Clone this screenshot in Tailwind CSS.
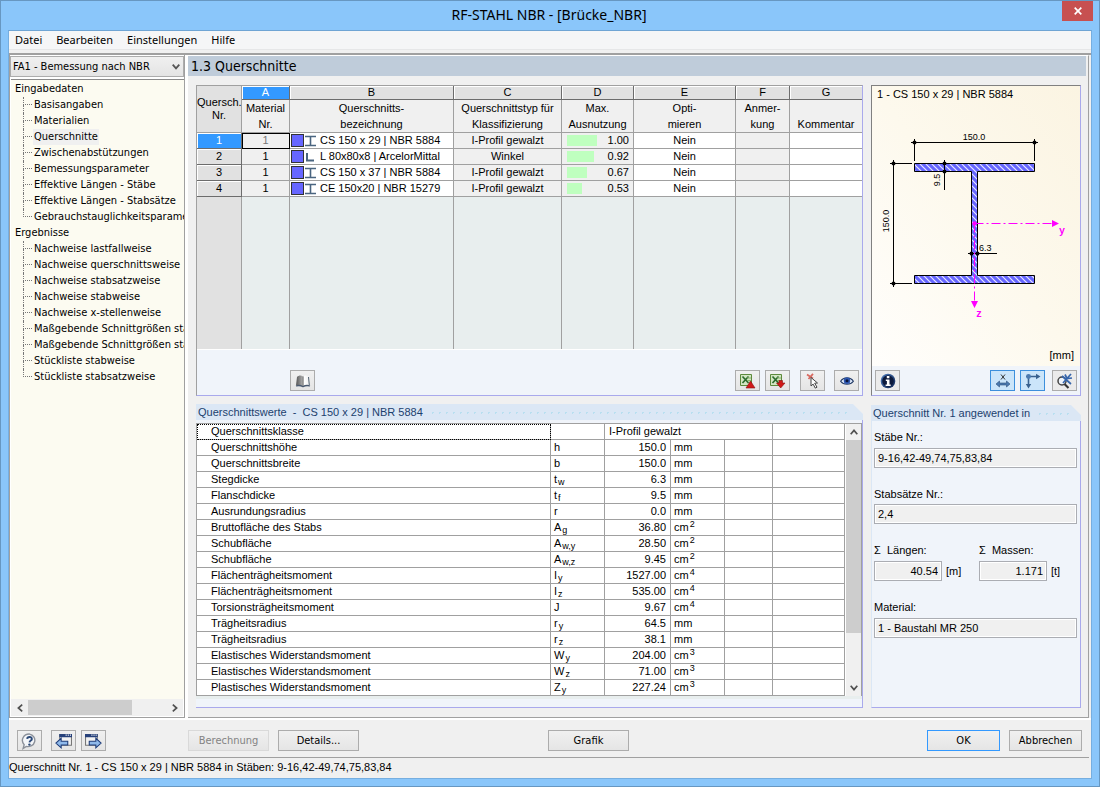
<!DOCTYPE html>
<html lang="de">
<head>
<meta charset="utf-8">
<meta name="viewport" content="width=device-width, initial-scale=1">
<title>RF-STAHL NBR - [Brücke_NBR]</title>
<script src="https://cdn.jsdelivr.net/npm/@tailwindcss/browser@4"></script>
</head>
<body class="flex flex-col min-h-screen bg-[#8ac6fa] border border-[#6797c1] font-['Liberation_Sans',sans-serif] text-[11px] text-black overflow-x-hidden">

<!-- icon definitions -->
<svg class="absolute w-0 h-0">
  <defs>
    <symbol id="i-beam" viewBox="0 0 13 12"><path d="M1 1.5h11M1 10.5h11M6.5 1v10" fill="none" stroke="#4a6580" stroke-width="1.6"/></symbol>
    <symbol id="i-angle" viewBox="0 0 13 12"><path d="M3 2v7.5h7" fill="none" stroke="#4a6580" stroke-width="2"/></symbol>
    <linearGradient id="g-book" x1="0" x2="1"><stop offset="0" stop-color="#555"/><stop offset=".45" stop-color="#aaa"/><stop offset=".6" stop-color="#fff"/><stop offset="1" stop-color="#eee"/></linearGradient>
    <linearGradient id="g-blue" x1="0" x2="1" y1="0" y2="1"><stop offset="0" stop-color="#4f7fc0"/><stop offset="1" stop-color="#0b1f4b"/></linearGradient>
  </defs>
</svg>

<!-- title bar -->
<header class="flex items-start h-[29px] shrink-0">
  <h1 class="flex-1 pl-[35px] pt-1 text-center font-['Noto_Sans',sans-serif] text-[14px] leading-5">RF-STAHL NBR - [Brücke_NBR]</h1>
  <button aria-label="Schließen" class="flex items-center justify-center w-[31px] h-5 mr-1.5 bg-[#c75050] hover:bg-red-600">
    <svg class="w-2 h-2" viewBox="0 0 8 8"><path d="M.7.7l6.6 6.6M7.3.7L.7 7.3" stroke="#fff" stroke-width="1.7"/></svg>
  </button>
</header>

<div class="flex flex-col flex-1 mx-[7px] mb-[7px] bg-[#f0f0f0] border border-t-[#6fa5d4] border-[#76aee0]">
  <!-- menu bar -->
  <nav class="flex items-center gap-[14px] h-[19px] shrink-0 pl-1.5 pt-px bg-[#f5f6f7] border-b border-[#e6e7e8] font-['Noto_Sans',sans-serif]">
    <a href="#">Datei</a><a href="#">Bearbeiten</a><a href="#">Einstellungen</a><a href="#">Hilfe</a>
  </nav>

  <div class="flex flex-1 min-h-0 mt-[3px] border-t-2 border-[#a0a0a0]">
    <!-- navigator -->
    <aside class="flex flex-col w-[176px] shrink-0 border-l border-r border-b border-[#a0a0a0] bg-white font-['DejaVu_Sans_Condensed','DejaVu_Sans',sans-serif]">
      <div class="grid mt-px mb-0.5 items-center">
        <select aria-label="Bemessungsfall" class="col-start-1 row-start-1 appearance-none w-full h-[21px] pl-0.5 pt-0.5 pr-4 bg-linear-to-b from-[#f0f0f0] to-[#e4e4e4] border border-[#acacac]"><option>FA1 - Bemessung nach NBR</option></select>
        <svg class="col-start-1 row-start-1 justify-self-end w-2 h-[6px] mr-1 pointer-events-none" viewBox="0 0 8 6"><path d="M.7.7L4 4.4 7.3.7" fill="none" stroke="#555" stroke-width="1.8"/></svg>
      </div>
      <div class="flex-1 overflow-hidden ml-px pt-px border-t border-[#8a8a8a] bg-[#fcfbf1] leading-4 whitespace-nowrap">
        <p class="pl-1">Eingabedaten</p>
        <ul class="pl-3 [&>li]:flex [&>li>span]:w-[9px] [&>li>span]:mr-px [&>li>span]:shrink-0 [&>li>span>i]:block [&>li>span>i]:h-2 [&>li>span>i]:border-l [&>li>span>i]:border-dotted [&>li>span>i]:border-[#777] [&>li>span>i:first-child]:border-b [&>li:last-child>span>i:last-child]:border-0 [&_a]:px-px">
          <li><span><i></i><i></i></span><a href="#">Basisangaben</a></li>
          <li><span><i></i><i></i></span><a href="#">Materialien</a></li>
          <li><span><i></i><i></i></span><a href="#" class="bg-[#f0f0f0]">Querschnitte</a></li>
          <li><span><i></i><i></i></span><a href="#">Zwischenabstützungen</a></li>
          <li><span><i></i><i></i></span><a href="#">Bemessungsparameter</a></li>
          <li><span><i></i><i></i></span><a href="#">Effektive Längen - Stäbe</a></li>
          <li><span><i></i><i></i></span><a href="#">Effektive Längen - Stabsätze</a></li>
          <li><span><i></i><i></i></span><a href="#">Gebrauchstauglichkeitsparamet</a></li>
        </ul>
        <p class="pl-1">Ergebnisse</p>
        <ul class="pl-3 [&>li]:flex [&>li>span]:w-[9px] [&>li>span]:mr-px [&>li>span]:shrink-0 [&>li>span>i]:block [&>li>span>i]:h-2 [&>li>span>i]:border-l [&>li>span>i]:border-dotted [&>li>span>i]:border-[#777] [&>li>span>i:first-child]:border-b [&>li:last-child>span>i:last-child]:border-0 [&_a]:px-px">
          <li><span><i></i><i></i></span><a href="#">Nachweise lastfallweise</a></li>
          <li><span><i></i><i></i></span><a href="#">Nachweise querschnittsweise</a></li>
          <li><span><i></i><i></i></span><a href="#">Nachweise stabsatzweise</a></li>
          <li><span><i></i><i></i></span><a href="#">Nachweise stabweise</a></li>
          <li><span><i></i><i></i></span><a href="#">Nachweise x-stellenweise</a></li>
          <li><span><i></i><i></i></span><a href="#">Maßgebende Schnittgrößen sta</a></li>
          <li><span><i></i><i></i></span><a href="#">Maßgebende Schnittgrößen sta</a></li>
          <li><span><i></i><i></i></span><a href="#">Stückliste stabweise</a></li>
          <li><span><i></i><i></i></span><a href="#">Stückliste stabsatzweise</a></li>
        </ul>
      </div>
      <div class="flex items-center h-[17px] mx-px mb-px bg-[#f0f0f0]">
        <button aria-label="Nach links" class="flex w-[17px] justify-center"><svg class="w-1.5 h-2" viewBox="0 0 6 8"><path d="M5.2.7L1.4 4l3.8 3.3" fill="none" stroke="#505050" stroke-width="1.7"/></svg></button>
        <div class="w-[104px] h-[15px] bg-[#cdcdcd]"></div>
        <button aria-label="Nach rechts" class="flex w-[17px] justify-center ml-auto"><svg class="w-1.5 h-2" viewBox="0 0 6 8"><path d="M.8.7L4.6 4 .8 7.3" fill="none" stroke="#505050" stroke-width="1.7"/></svg></button>
      </div>
    </aside>

    <!-- main mask -->
    <main class="flex flex-col flex-1 min-w-0 border-l-[3px] border-white">
      <div class="flex flex-col flex-1 mr-[2px] border-t border-t-white border-r border-b border-r-[#a0a0a0] border-b-[#a0a0a0]">
        <h2 class="h-5 pl-[3px] mr-[2px] bg-[#bfccda] font-['DejaVu_Sans_Condensed','DejaVu_Sans',sans-serif] text-[14px] leading-[21px]">1.3 Querschnitte</h2>
        <div class="flex flex-1 gap-2 pt-[9px] pb-[9px] pl-2 pr-[7px]">

          <!-- left column -->
          <div class="flex flex-col flex-1 min-w-0 gap-2">
            <section class="flex flex-col h-[311px] bg-[#f0f4fa] border border-t-[#a0a0a0] border-l-[#a0a0a0] border-r-[#a9a9ec] border-b-[#a9a9ec]">
              <div class="h-[264px] border-b border-white">
              <table class="w-full h-full table-fixed border-separate border-spacing-0 text-center leading-[15px] whitespace-nowrap [&_td]:border-b [&_td]:border-r [&_td]:border-[#a0a0a0] [&_th]:font-normal [&_th]:p-0 [&_td]:p-0 [&_tr>*:last-child]:border-r-0">
                <colgroup><col class="w-[45px]"><col class="w-12"><col class="w-[164px]"><col class="w-[108px]"><col class="w-[72px]"><col class="w-[102px]"><col class="w-[54px]"><col></colgroup>
                <thead>
                  <tr class="h-[14px] leading-[13px] [&>th]:bg-[#e1e1e1] [&>th]:border-r [&>th]:border-b [&>th]:border-[#6c6c6c] [&>th]:shadow-[inset_1px_1px_0_#fff]">
                    <th rowspan="2" class="!border-[#a0a0a0] !shadow-none">Quersch.<br>Nr.</th>
                    <th class="!bg-[#3399ff] text-white">A</th><th>B</th><th>C</th><th>D</th><th>E</th><th>F</th><th>G</th>
                  </tr>
                  <tr class="h-[33px] leading-4 bg-[#f0f0f0] [&>th]:border-r [&>th]:border-b [&>th]:border-[#a0a0a0]">
                    <th>Material<br>Nr.</th><th>Querschnitts-<br>bezeichnung</th><th>Querschnittstyp für<br>Klassifizierung</th><th>Max.<br>Ausnutzung</th><th>Opti-<br>mieren</th><th>Anmer-<br>kung</th><th class="align-bottom">Kommentar</th>
                  </tr>
                </thead>
                <tbody class="[&>tr>th]:bg-[#e1e1e1] [&>tr>th]:border-r [&>tr>th]:border-b [&>tr>th]:border-[#6c6c6c] [&>tr>th]:shadow-[inset_1px_1px_0_#fff]">
                  <tr class="h-4 bg-white">
                    <th class="!bg-[#3399ff] text-white">1</th>
                    <td class="bg-[#f0f0f0] text-[#777] !border-black shadow-[inset_1px_1px_0_#000]">1</td>
                    <td><div class="flex items-center gap-[3px] pl-px"><i class="w-[13px] h-[13px] bg-[#6666ff] border border-[#333]"></i><svg class="w-[13px] h-3 -ml-[3px]"><use href="#i-beam"/></svg>CS 150 x 29 | NBR 5884</div></td>
                    <td class="bg-[#f0f0f0]">I-Profil gewalzt</td>
                    <td class="bg-[#f0f0f0]"><div class="flex items-center justify-between pl-[5px] pr-1"><i class="h-[11px] bg-[#bfffbf]" style="width:30px"></i>1.00</div></td>
                    <td>Nein</td><td class="bg-[#f0f0f0]"></td><td></td>
                  </tr>
                  <tr class="h-4 bg-white">
                    <th>2</th><td class="bg-[#f0f0f0]">1</td>
                    <td><div class="flex items-center gap-[3px] pl-px"><i class="w-[13px] h-[13px] bg-[#6666ff] border border-[#333]"></i><svg class="w-[13px] h-3 -ml-[3px]"><use href="#i-angle"/></svg>L 80x80x8 | ArcelorMittal</div></td>
                    <td class="bg-[#f0f0f0]">Winkel</td>
                    <td class="bg-[#f0f0f0]"><div class="flex items-center justify-between pl-[5px] pr-1"><i class="h-[11px] bg-[#bfffbf]" style="width:27px"></i>0.92</div></td>
                    <td>Nein</td><td class="bg-[#f0f0f0]"></td><td></td>
                  </tr>
                  <tr class="h-4 bg-white">
                    <th>3</th><td class="bg-[#f0f0f0]">1</td>
                    <td><div class="flex items-center gap-[3px] pl-px"><i class="w-[13px] h-[13px] bg-[#6666ff] border border-[#333]"></i><svg class="w-[13px] h-3 -ml-[3px]"><use href="#i-beam"/></svg>CS 150 x 37 | NBR 5884</div></td>
                    <td class="bg-[#f0f0f0]">I-Profil gewalzt</td>
                    <td class="bg-[#f0f0f0]"><div class="flex items-center justify-between pl-[5px] pr-1"><i class="h-[11px] bg-[#bfffbf]" style="width:20px"></i>0.67</div></td>
                    <td>Nein</td><td class="bg-[#f0f0f0]"></td><td></td>
                  </tr>
                  <tr class="h-4 bg-white">
                    <th>4</th><td class="bg-[#f0f0f0]">1</td>
                    <td><div class="flex items-center gap-[3px] pl-px"><i class="w-[13px] h-[13px] bg-[#6666ff] border border-[#333]"></i><svg class="w-[13px] h-3 -ml-[3px]"><use href="#i-beam"/></svg>CE 150x20 | NBR 15279</div></td>
                    <td class="bg-[#f0f0f0]">I-Profil gewalzt</td>
                    <td class="bg-[#f0f0f0]"><div class="flex items-center justify-between pl-[5px] pr-1"><i class="h-[11px] bg-[#bfffbf]" style="width:15px"></i>0.53</div></td>
                    <td>Nein</td><td class="bg-[#f0f0f0]"></td><td></td>
                  </tr>
                  <tr class="bg-[#e8eeee] [&>td]:border-b-0"><td class="bg-[#e1e1e1]"></td><td></td><td></td><td></td><td></td><td></td><td></td><td></td></tr>
                </tbody>
              </table>
              </div>
              <div class="flex items-end flex-1 pl-[93px] pr-[3px] pb-1 [&>button]:flex [&>button]:items-center [&>button]:justify-center [&>button]:w-[25px] [&>button]:h-[21px] [&>button]:border [&>button]:border-[#acacac] [&>button]:bg-linear-to-b [&>button]:from-[#f0f0f0] [&>button]:to-[#e5e5e5]">
                <button aria-label="Bibliothek" class="mr-auto"><svg class="w-4 h-[14px]" viewBox="0 0 16 14"><path d="M1 11.5L2 3c2-2 4-2 6-.5C10 1 12 1 14 3l1 8.500c-3-1-5-.5-7 .5-2-1-4-1.500-7-.5z" fill="url(#g-book)"/><path d="M1 12c3-1 5-.5 7 .6 2-1.100 4-1.600 7-.6" fill="none" stroke="#4a5a70" stroke-width="1.300"/><path d="M8 2.500V12" stroke="#777"/><path d="M13.500 3l.8 8" stroke="#50606f" stroke-width="1"/></svg></button>
                <button aria-label="Excel-Export"><svg class="w-[17px] h-4" viewBox="0 0 17 16"><path d="M1.500 1.500h11v11h-11z" fill="#d3e6c3" stroke="#5d8a3c"/><path d="M3.500 3.500l6 6.500M9.500 3.500l-6 6.500" stroke="#2d6b2d" stroke-width="1.700"/><path d="M8 5h4M8 7.500h4" stroke="#8ab36b"/><path d="M11.500 8l4.500 7H7z" fill="#d01818" stroke="#8a1010" stroke-width=".6"/></svg></button>
                <button aria-label="Excel-Import" class="ml-[5px]"><svg class="w-[17px] h-4" viewBox="0 0 17 16"><path d="M1.500 1.500h11v11h-11z" fill="#d3e6c3" stroke="#5d8a3c"/><path d="M3.500 3.500l6 6.500M9.500 3.500l-6 6.500" stroke="#2d6b2d" stroke-width="1.700"/><path d="M8 5h4M8 7.500h4" stroke="#8ab36b"/><path d="M10 7.500h3.500v2.500h2.500l-4.300 5-4.200-5H10z" fill="#d01818" stroke="#8a1010" stroke-width=".6"/></svg></button>
                <button aria-label="Auswählen" class="ml-[10px]"><svg class="w-4 h-4" viewBox="0 0 16 16"><path d="M2 1.500l6 4M8 .8L3.500 6" stroke="#d86a60" stroke-width="1.800"/><path d="M6 4.500l6.500 5.500-2.800.2 2.300 4-1.700.9-2.200-4L6 13z" fill="#fff" stroke="#444" stroke-width="1"/></svg></button>
                <button aria-label="Ansicht" class="ml-[9px]"><svg class="w-[14px] h-[10px]" viewBox="0 0 14 10"><path d="M.6 5.200C3.500.8 10.500.8 13.400 5.200 10.500 9.200 3.500 9.200.6 5.200z" fill="#dfe8f7" stroke="#223a66" stroke-width="1.100"/><circle cx="7" cy="4.800" r="3.200" fill="#2c56b0"/><circle cx="7" cy="4.800" r="1.500" fill="#0a1538"/></svg></button>
              </div>
            </section>

            <section class="flex flex-col flex-1">
              <h3 class="flex items-center gap-1.5 h-4 pl-0.5 pr-3 bg-[#dbe7f5] text-[#1c3f6e] whitespace-pre [clip-path:polygon(0_0,calc(100%-10px)_0,100%_10px,100%_100%,0_100%)]">Querschnittswerte  -  CS 150 x 29 | NBR 5884<i class="flex-1 h-[3px] bg-[radial-gradient(circle,#b9dff0_1px,transparent_1px)] bg-[length:7px_3px]"></i></h3>
              <div class="flex flex-col flex-1 pt-[3px] bg-[#f0f4fa] border-b border-r border-[#a9a9ec]">
                <div class="flex border-t border-[#a0a0a0]">
                <table class="flex-1 table-fixed border-separate border-spacing-0 bg-white leading-[15px] border-l border-[#a0a0a0] [&_td]:p-0 [&_td]:border-r [&_td]:border-b [&_td]:border-[#a0a0a0] [&_th]:font-normal [&_th]:text-left [&_th]:border-r [&_th]:border-b [&_th]:border-[#a0a0a0] [&_th]:p-0 [&_th]:pl-[14px] [&_tr]:h-4 [&_td:nth-child(2)]:pl-[3px] [&_tr:not(:first-child)>td:nth-child(3)]:text-right [&_td:nth-child(3)]:pr-1 [&_td:nth-child(4)]:pl-[3px] [&_sub]:text-[9px] [&_sub]:ml-px [&_sup]:text-[9px] [&_sup]:ml-px whitespace-nowrap">
                  <colgroup><col><col class="w-[54px]"><col class="w-[66px]"><col class="w-[54px]"><col class="w-12"><col class="w-[72px]"></colgroup>
                  <tbody>
                  <tr><th class="outline-1 outline-dotted -outline-offset-1 outline-black">Querschnittsklasse</th><td></td><td colspan="3" class="pl-1!">I-Profil gewalzt</td><td></td></tr>
                  <tr><th>Querschnittshöhe</th><td>h</td><td>150.0</td><td>mm</td><td></td><td></td></tr>
                  <tr><th>Querschnittsbreite</th><td>b</td><td>150.0</td><td>mm</td><td></td><td></td></tr>
                  <tr><th>Stegdicke</th><td>t<sub>w</sub></td><td>6.3</td><td>mm</td><td></td><td></td></tr>
                  <tr><th>Flanschdicke</th><td>t<sub>f</sub></td><td>9.5</td><td>mm</td><td></td><td></td></tr>
                  <tr><th>Ausrundungsradius</th><td>r</td><td>0.0</td><td>mm</td><td></td><td></td></tr>
                  <tr><th>Bruttofläche des Stabs</th><td>A<sub>g</sub></td><td>36.80</td><td>cm<sup>2</sup></td><td></td><td></td></tr>
                  <tr><th>Schubfläche</th><td>A<sub>w,y</sub></td><td>28.50</td><td>cm<sup>2</sup></td><td></td><td></td></tr>
                  <tr><th>Schubfläche</th><td>A<sub>w,z</sub></td><td>9.45</td><td>cm<sup>2</sup></td><td></td><td></td></tr>
                  <tr><th>Flächenträgheitsmoment</th><td>I<sub>y</sub></td><td>1527.00</td><td>cm<sup>4</sup></td><td></td><td></td></tr>
                  <tr><th>Flächenträgheitsmoment</th><td>I<sub>z</sub></td><td>535.00</td><td>cm<sup>4</sup></td><td></td><td></td></tr>
                  <tr><th>Torsionsträgheitsmoment</th><td>J</td><td>9.67</td><td>cm<sup>4</sup></td><td></td><td></td></tr>
                  <tr><th>Trägheitsradius</th><td>r<sub>y</sub></td><td>64.5</td><td>mm</td><td></td><td></td></tr>
                  <tr><th>Trägheitsradius</th><td>r<sub>z</sub></td><td>38.1</td><td>mm</td><td></td><td></td></tr>
                  <tr><th>Elastisches Widerstandsmoment</th><td>W<sub>y</sub></td><td>204.00</td><td>cm<sup>3</sup></td><td></td><td></td></tr>
                  <tr><th>Elastisches Widerstandsmoment</th><td>W<sub>z</sub></td><td>71.00</td><td>cm<sup>3</sup></td><td></td><td></td></tr>
                  <tr><th>Plastisches Widerstandsmoment</th><td>Z<sub>y</sub></td><td>227.24</td><td>cm<sup>3</sup></td><td></td><td></td></tr>
                  </tbody>
                </table>
                <div class="flex flex-col items-center w-[17px] bg-[#f0f0f0] border-l border-r border-l-white border-r-[#a0a0a0]">
                  <button aria-label="Nach oben" class="flex items-center h-4"><svg class="w-2 h-1.5" viewBox="0 0 8 6"><path d="M.7 5.200L4 1.400l3.300 3.800" fill="none" stroke="#505050" stroke-width="1.700"/></svg></button>
                  <div class="w-full h-[193px] bg-[#cdcdcd]"></div>
                  <button aria-label="Nach unten" class="flex items-center h-4 mt-auto"><svg class="w-2 h-1.5" viewBox="0 0 8 6"><path d="M.7.8L4 4.600 7.300.8" fill="none" stroke="#505050" stroke-width="1.700"/></svg></button>
                </div>
                </div>
                <div class="h-[3px] bg-[#e8eeee]"></div>
              </div>
            </section>
          </div>

          <!-- right column -->
          <div class="flex flex-col w-[210px] shrink-0 gap-[9px]">
            <section class="flex flex-col h-[311px] bg-[#f0f4fa] border border-t-[#808080] border-l-[#808080] border-r-[#a9a9ec] border-b-[#a9a9ec]">
              <svg class="w-full h-[280px] bg-linear-to-bl from-[#fbf4e2] via-[#fdf9ed] to-[#fffefc]" viewBox="872 86 208 280" font-family="'Liberation Sans',sans-serif">
                <defs><pattern id="hatch" width="6" height="6" patternUnits="userSpaceOnUse"><rect width="6" height="6" fill="#6666ff"/><path d="M-1 -1L7 7M-1 5L1 7M5 -1L7 1" stroke="#e6e6ff" stroke-width="1.200"/></pattern></defs>
                <text x="877" y="98" font-size="11">1 - CS 150 x 29 | NBR 5884</text>
                <path d="M914.500 163.500h120v8h-57v104h57v8h-120v-8h57v-104h-57z" fill="url(#hatch)" stroke="#000"/>
                <path d="M911 142.500h127M914.500 139v22M1034.500 139v22M893.500 160v127M890 163.500h22M890 283.500h22M944.500 160v30M968 253.500h29" fill="none" stroke="#000"/>
                <g><circle cx="914.500" cy="142.500" r="2"/><circle cx="1034.500" cy="142.500" r="2"/><circle cx="893.500" cy="163.500" r="2"/><circle cx="893.500" cy="283.500" r="2"/><circle cx="944.500" cy="163.500" r="2"/><circle cx="944.500" cy="171.500" r="2"/><circle cx="971.500" cy="253.500" r="2"/><circle cx="977.500" cy="253.500" r="2"/></g>
                <text x="974" y="140" font-size="9" text-anchor="middle">150.0</text>
                <text transform="translate(889 221) rotate(-90)" font-size="9" text-anchor="middle">150.0</text>
                <text transform="translate(940 180) rotate(-90)" font-size="9" text-anchor="middle">9.5</text>
                <text x="979" y="251" font-size="9">6.3</text>
                <path d="M974.500 223.500h78M974.500 223.500v78" stroke="#f0f" stroke-dasharray="9 3 2 3"/>
                <path d="M1052 220l7 3.500-7 3.500zM971 301l3.500 7 3.500-7z" fill="#f0f"/><circle cx="974.500" cy="223.500" r="2.200" fill="#f0f"/>
                <text x="1059" y="234" font-size="10" fill="#f0f" font-family="'Liberation Mono',monospace" font-weight="bold">y</text>
                <text x="976" y="317" font-size="10" fill="#f0f" font-family="'Liberation Mono',monospace" font-weight="bold">z</text>
                <text x="1074" y="359" font-size="11" text-anchor="end">[mm]</text>
              </svg>
              <div class="flex items-center flex-1 pl-[3px] pr-[3px] [&>button]:flex [&>button]:items-center [&>button]:justify-center [&>button]:w-[25px] [&>button]:h-[21px] [&>button]:border [&>button]:border-[#acacac] [&>button]:bg-[#ebebeb]">
                <button aria-label="Info" class="mr-auto"><svg class="w-4 h-4" viewBox="0 0 16 16"><circle cx="8" cy="8" r="7.300" fill="url(#g-blue)"/><circle cx="8" cy="8" r="5.800" fill="#0c1a3c"/><path d="M6.800 3h2.600v2.300H6.800zM5.800 6.500h3.700v5h1.200v1.600H5.600v-1.600h1.300V8h-1.100z" fill="#fff"/></svg></button>
                <button aria-label="Bemaßung" class="!bg-[#cbe5fa] !border-[#3c8fdc]"><svg class="w-4 h-4" viewBox="0 0 16 16"><path d="M6 1.500l4 5M10 1.500l-4 5" stroke="#333" stroke-width="1"/><path d="M1 11l3.500-3v2h7V8l3.500 3-3.500 3v-2h-7v2z" fill="#4a7ab0" stroke="#2b4d7a" stroke-width=".6"/></svg></button>
                <button aria-label="Achsen" class="ml-[5px] !bg-[#cbe5fa] !border-[#3c8fdc]"><svg class="w-4 h-4" viewBox="0 0 16 16"><path d="M1 3.500h11M3.500 3.500v9" stroke="#38618f" stroke-width="1.600"/><path d="M11 .8l4.500 2.700L11 6.200zM.8 11h5.400l-2.700 4.500z" fill="#38618f"/><circle cx="3.500" cy="3.500" r="2.400" fill="#4a7ab0"/></svg></button>
                <button aria-label="Zoom zurücksetzen" class="ml-[7px]"><svg class="w-[17px] h-4" viewBox="0 0 17 16"><circle cx="6" cy="8" r="4" fill="#eef4fb" stroke="#444" stroke-width="1.500"/><path d="M8.500 11l4 4" stroke="#333" stroke-width="2.200"/><path d="M6 3l9 8M15 1L7 10M9 1.500l2 4 5-.5" stroke="#3766ab" stroke-width="1.700" fill="none"/></svg></button>
              </div>
            </section>

            <section class="flex flex-col flex-1">
              <h3 class="flex items-center gap-1.5 h-4 pl-0.5 pr-2 bg-[#dbe7f5] text-[#1c3f6e] whitespace-nowrap [clip-path:polygon(0_0,calc(100%-10px)_0,100%_10px,100%_100%,0_100%)]">Querschnitt Nr. 1 angewendet in<i class="flex-1 h-[3px] bg-[radial-gradient(circle,#b9dff0_1px,transparent_1px)] bg-[length:7px_3px]"></i></h3>
              <div class="flex-1 pl-0.5 pr-[3px] pt-[9px] bg-[#f0f4fa] border-l border-l-[#dbe7f5] border-b border-r border-r-[#a9a9ec] border-b-[#a9a9ec] [&_label]:block [&_label]:leading-[14px] [&_input]:h-5 [&_input]:px-[3px] [&_input]:bg-[#f0f0f0] [&_input]:border [&_input]:border-[#abadb3] [&_input]:shadow-[inset_0_0_0_1px_#fff]">
                <label for="members">Stäbe Nr.:</label>
                <input id="members" readonly value="9-16,42-49,74,75,83,84" class="w-full mt-1 mb-[19px]">
                <label for="sets">Stabsätze Nr.:</label>
                <input id="sets" readonly value="2,4" class="w-full mt-[3px] mb-[19px]">
                <div class="flex gap-[18px] mb-[19px]">
                  <div><label for="len">Σ&nbsp; Längen:</label><div class="flex items-center gap-1 mt-1"><input id="len" readonly value="40.54" class="w-[68px] text-right"><span class="w-[15px]">[m]</span></div></div>
                  <div><label for="mass">Σ&nbsp; Massen:</label><div class="flex items-center gap-1 mt-1"><input id="mass" readonly value="1.171" class="w-[68px] text-right">[t]</div></div>
                </div>
                <label for="mat">Material:</label>
                <input id="mat" readonly value="1 - Baustahl MR 250" class="w-full mt-1">
              </div>
            </section>
          </div>
        </div>
      </div>
    </main>
  </div>

  <!-- command buttons -->
  <footer class="flex items-center h-[39px] shrink-0 border-t-2 border-white pl-2 pr-[9px] font-['DejaVu_Sans_Condensed','DejaVu_Sans',sans-serif] [&>button]:flex [&>button]:items-center [&>button]:justify-center [&>button]:h-[21px] [&>button]:mt-1 [&>button]:pt-px [&>button]:border [&>button]:border-[#acacac] [&>button]:bg-linear-to-b [&>button]:from-[#f0f0f0] [&>button]:to-[#e5e5e5]">
    <button aria-label="Hilfe" class="w-[25px]"><svg class="w-[17px] h-[17px]" viewBox="0 0 16 16"><path d="M8 1a6.500 6 0 1 1-3 11.700L2 14.500l1-3.500A6.500 6 0 0 1 8 1z" fill="#f4f6f9" stroke="#8b9099" stroke-width="1.300"/><path d="M5.800 5.500c.2-2.300 4.600-2.200 4.400.2-.1 1.500-2 1.400-2.200 3.200" fill="none" stroke="#2d4a78" stroke-width="1.800"/><circle cx="7.900" cy="10.900" r="1.100" fill="#2d4a78"/></svg></button>
    <button aria-label="Vorherige Maske" class="w-[25px] ml-[9px]"><svg class="w-[17px] h-[17px]" viewBox="0 0 16 16"><path d="M4.500 1.500h11v10h-11z" fill="#f2f2f2" stroke="#777"/><path d="M4 1h12v3H4z" fill="#26407a"/><path d="M10 2h1m1 0h1m1 0h1" stroke="#fff"/><path d="M.8 9.500l5-4.500v2.700H12v3.600H5.800V14z" fill="#8fb9ea" stroke="#1d3b78"/></svg></button>
    <button aria-label="Nächste Maske" class="w-[25px] ml-[5px]"><svg class="w-[17px] h-[17px]" viewBox="0 0 16 16"><path d="M.5 1.500h11v10H.5z" fill="#f2f2f2" stroke="#777"/><path d="M0 1h12v3H0z" fill="#26407a"/><path d="M6 2h1m1 0h1m1 0h1" stroke="#fff"/><path d="M15.200 9.500l-5-4.500v2.700H4v3.600h6.200V14z" fill="#8fb9ea" stroke="#1d3b78"/></svg></button>
    <button disabled class="w-[81px] ml-[82px] text-[#838383] border-[#d9d9d9]!">Berechnung</button>
    <button class="w-[81px] ml-[9px]">Details...</button>
    <button class="w-[81px] ml-[189px]">Grafik</button>
    <button class="w-[73px] ml-auto border-[#3399ff]!">OK</button>
    <button class="w-[73px] ml-[9px]">Abbrechen</button>
  </footer>

  <p class="h-[21px] shrink-0 mr-[2px] border-t border-[#a0a0a0] leading-[19px] whitespace-nowrap">Querschnitt Nr. 1 - CS 150 x 29 | NBR 5884 in Stäben: 9-16,42-49,74,75,83,84</p>
</div>
</body>
</html>
